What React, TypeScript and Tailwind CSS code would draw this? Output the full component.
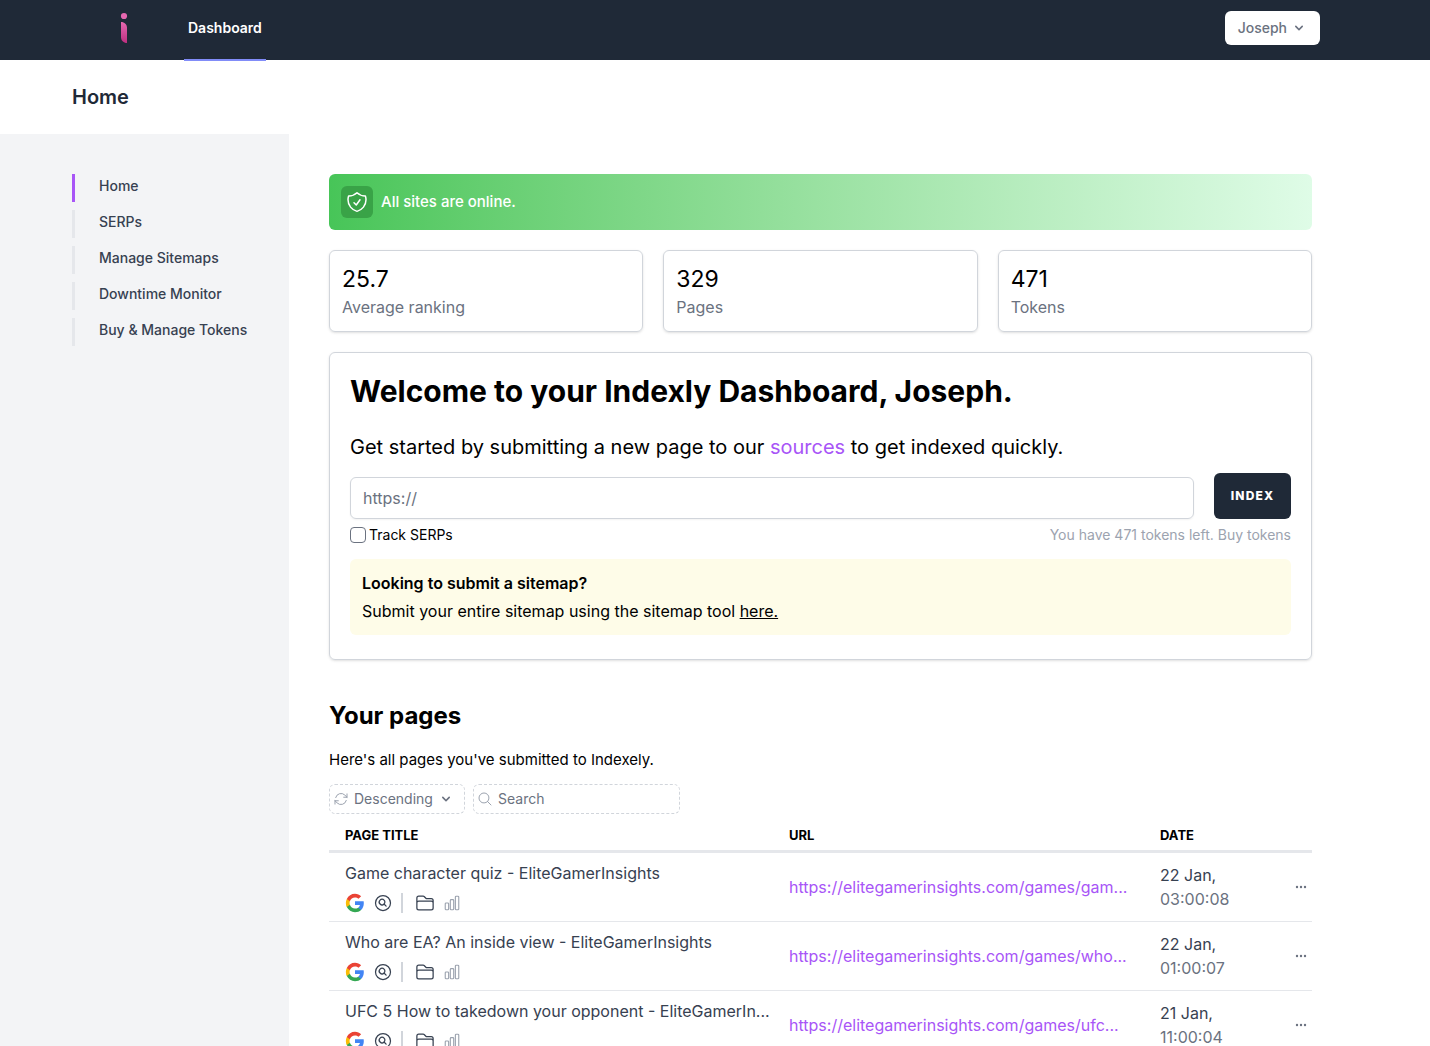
import { useState } from 'react';
import {
  HiOutlineArrowPath,
  HiOutlineChartBar,
  HiOutlineFolder,
  HiOutlineMagnifyingGlass,
  HiOutlineMagnifyingGlassCircle,
  HiOutlineShieldCheck,
} from 'react-icons/hi2';
import clsx from 'clsx';

const navItems = ['Home', 'SERPs', 'Manage Sitemaps', 'Downtime Monitor', 'Buy & Manage Tokens'];

const stats = [
  { value: '25.7', label: 'Average ranking' },
  { value: '329', label: 'Pages' },
  { value: '471', label: 'Tokens' },
];

const pages = [
  {
    title: 'Game character quiz - EliteGamerInsights',
    url: 'https://elitegamerinsights.com/games/gam...',
    day: '22 Jan,',
    time: '03:00:08',
  },
  {
    title: 'Who are EA? An inside view - EliteGamerInsights',
    url: 'https://elitegamerinsights.com/games/who...',
    day: '22 Jan,',
    time: '01:00:07',
  },
  {
    title: 'UFC 5 How to takedown your opponent - EliteGamerIn...',
    url: 'https://elitegamerinsights.com/games/ufc...',
    day: '21 Jan,',
    time: '11:00:04',
  },
];

export default function App() {
  return (
    <div className="flex min-h-screen flex-col bg-white font-['Inter','Roboto',sans-serif] text-black">
      <TopNav />
      <header className="px-[72px] py-[23px]">
        <h1 className="text-xl leading-7 font-semibold text-[#1f2937]">Home</h1>
      </header>
      <div className="flex flex-1">
        <Sidebar />
        <main className="min-w-0 flex-1 py-10 pr-[118px] pl-10">
          <div className="flex items-center gap-2 rounded-md bg-linear-to-r from-[#47c558] to-[#dffce7] p-3">
            <span className="flex size-8 items-center justify-center rounded-md bg-[#39a347]">
              <HiOutlineShieldCheck className="size-6 text-white" />
            </span>
            <p className="text-[15px] leading-6 font-medium text-white">All sites are online.</p>
          </div>

          <div className="mt-5 grid grid-cols-3 gap-5">
            {stats.map((stat) => (
              <div key={stat.label} className="rounded-md border border-[#d1d5db] p-3 shadow-sm">
                <p className="text-[23px] leading-8">{stat.value}</p>
                <p className="text-base leading-6 text-[#6b7280]">{stat.label}</p>
              </div>
            ))}
          </div>

          <SubmitCard />
          <PagesSection />
        </main>
      </div>
    </div>
  );
}

function TopNav() {
  return (
    <nav className="flex h-[60px] items-center justify-between bg-[#1f2937] pr-[110px] pl-[120px]">
      <div className="flex h-full items-center">
        <a href="#" aria-label="Indexly">
          <Logo />
        </a>
        <a
          href="#"
          className="ml-14 flex h-[61px] items-center self-start border-b-2 border-[#818cf8] px-1 pb-1 text-sm font-semibold text-white"
        >
          Dashboard
        </a>
      </div>
      <button className="mb-1 flex h-[34px] items-center gap-1 rounded-md bg-white px-[13px] text-sm font-medium text-[#6b7280]">
        Joseph
        <ChevronDown />
      </button>
    </nav>
  );
}

function Sidebar() {
  const [active, setActive] = useState('Home');

  return (
    <aside className="w-[289px] shrink-0 bg-[#f3f4f6] pt-10 pl-[72px]">
      <ul className="space-y-2">
        {navItems.map((item) => (
          <li key={item}>
            <a
              href="#"
              onClick={() => setActive(item)}
              className={clsx(
                'block border-l-3 pb-1 pl-6 text-sm leading-6 font-medium text-[#374151]',
                active === item ? 'border-[#a855f7]' : 'border-[#e5e7eb]'
              )}
            >
              {item}
            </a>
          </li>
        ))}
      </ul>
    </aside>
  );
}

function SubmitCard() {
  return (
    <section className="mt-5 rounded-md border border-[#d1d5db] px-5 pt-5 pb-6 shadow-sm">
      <h2 className="text-3xl leading-9 font-bold">Welcome to your Indexly Dashboard, Joseph.</h2>
      <p className="mt-6 text-xl leading-7">
        Get started by submitting a new page to our{' '}
        <a href="#" className="text-[#a855f7]">sources</a> to get indexed quickly.
      </p>
      <form onSubmit={(e) => e.preventDefault()}>
        <div className="mt-3 flex items-end gap-5">
          <input
            type="text"
            aria-label="Page URL"
            placeholder="https://"
            className="h-[42px] min-w-0 flex-1 rounded-md border border-[#d1d5db] px-3 text-base shadow-xs placeholder:text-[#6b7280]"
          />
          <button className="h-[46px] w-[77px] rounded-md bg-[#1f2937] text-xs font-extrabold tracking-widest text-white uppercase">
            Index
          </button>
        </div>
        <div className="mt-1.5 flex items-center justify-between text-sm leading-5">
          <label className="flex items-center gap-[3px]">
            <input type="checkbox" className="size-4 appearance-none rounded-sm border border-[#6b7280] bg-white checked:bg-[#a855f7]" />
            Track SERPs
          </label>
          <p className="text-[#9ca3af]">
            You have 471 tokens left. <a href="#">Buy tokens</a>
          </p>
        </div>
      </form>
      <div className="mt-3.5 space-y-1 rounded-md bg-[#fefce8] p-3 text-base leading-6">
        <p className="font-semibold">Looking to submit a sitemap?</p>
        <p>
          Submit your entire sitemap using the sitemap tool <a href="#" className="underline">here.</a>
        </p>
      </div>
    </section>
  );
}

function PagesSection() {
  return (
    <section className="mt-10">
      <h2 className="text-2xl leading-8 font-bold">Your pages</h2>
      <p className="mt-4 text-[15px] leading-6">Here's all pages you've submitted to Indexely.</p>

      <div className="mt-3 flex gap-2 text-sm text-[#6b7280]">
        <div className="flex h-[30px] w-[136px] items-center gap-[5px] rounded-md border border-dashed border-[#d1d5db] pr-[10px] pl-[3px]">
          <HiOutlineArrowPath className="size-4 shrink-0 text-[#9ca3af]" />
          <select aria-label="Sort order" className="min-w-0 flex-1 appearance-none bg-transparent">
            <option>Descending</option>
            <option>Ascending</option>
          </select>
          <ChevronDown />
        </div>
        <div className="flex h-[30px] w-[207px] items-center gap-[5px] rounded-md border border-dashed border-[#d1d5db] px-[3px]">
          <HiOutlineMagnifyingGlass className="size-4 shrink-0 text-[#9ca3af]" />
          <input
            type="text"
            aria-label="Search pages"
            placeholder="Search"
            className="min-w-0 flex-1 placeholder:text-[#6b7280]"
          />
        </div>
      </div>

      <table className="w-full table-fixed border-collapse text-left text-base leading-6">
        <thead>
          <tr className="border-b-3 border-[#e5e7eb] text-[13px] leading-5 uppercase">
            <th className="px-4 pt-[11px] pb-[5px] font-bold">Page title</th>
            <th className="w-[371px] px-4 pt-[11px] pb-[5px] font-bold">URL</th>
            <th className="w-[120px] px-4 pt-[11px] pb-[5px] font-bold">Date</th>
            <th className="w-12" />
          </tr>
        </thead>
        <tbody>
          {pages.map((page) => (
            <tr key={page.url} className="border-b border-[#e5e7eb]">
              <td className="px-4 py-2 text-[#374151]">
                <p className="whitespace-nowrap">{page.title}</p>
                <div className="mt-2 flex h-5 items-center">
                  <GoogleIcon />
                  <HiOutlineMagnifyingGlassCircle className="ml-2 size-5" />
                  <span className="ml-2 h-5 w-0.5 bg-[#d1d5db]" />
                  <HiOutlineFolder className="ml-3 size-5" />
                  <HiOutlineChartBar className="ml-2 size-[18px] text-[#9ca3af]" />
                </div>
              </td>
              <td className="px-4">
                <a href="#" className="whitespace-nowrap text-[#a855f7]">{page.url}</a>
              </td>
              <td className="px-4 text-[#374151]">
                {page.day}
                <span className="block text-[#6b7280]">{page.time}</span>
              </td>
              <td className="pr-1">
                <button aria-label="More options" className="ml-auto block text-[#6b7280]">
                  <svg viewBox="0 0 14 14" fill="currentColor" className="size-[14px]">
                    <circle cx="3" cy="7" r="1.2" />
                    <circle cx="7" cy="7" r="1.2" />
                    <circle cx="11" cy="7" r="1.2" />
                  </svg>
                </button>
              </td>
            </tr>
          ))}
        </tbody>
      </table>
    </section>
  );
}

function ChevronDown() {
  return (
    <svg viewBox="0 0 20 20" fill="currentColor" className="size-4 shrink-0">
      <path
        fillRule="evenodd"
        d="M5.293 7.293a1 1 0 011.414 0L10 10.586l3.293-3.293a1 1 0 111.414 1.414l-4 4a1 1 0 01-1.414 0l-4-4a1 1 0 010-1.414z"
        clipRule="evenodd"
      />
    </svg>
  );
}

function Logo() {
  return (
    <svg width="8" height="32" viewBox="0 0 8 32" className="mb-1">
      <defs>
        <linearGradient id="logo" x1="0" y1="0" x2="0" y2="1">
          <stop offset="0" stopColor="#e668b0" />
          <stop offset="1" stopColor="#bd2f80" />
        </linearGradient>
      </defs>
      <circle cx="4" cy="4" r="3.1" fill="#e668b0" />
      <path d="M1 10C4.5 10 7 12.5 7 16V31C3.5 31 1 28.5 1 25Z" fill="url(#logo)" />
    </svg>
  );
}

function GoogleIcon() {
  return (
    <svg viewBox="0 0 24 24" className="size-5">
      <path
        fill="#4285f4"
        d="M22.56 12.25c0-.78-.07-1.53-.2-2.25H12v4.26h5.92c-.26 1.37-1.04 2.53-2.21 3.31v2.77h3.57c2.08-1.92 3.28-4.74 3.28-8.09z"
      />
      <path
        fill="#34a853"
        d="M12 23c2.97 0 5.46-.98 7.28-2.66l-3.57-2.77c-.98.66-2.23 1.06-3.71 1.06-2.86 0-5.29-1.93-6.16-4.53H2.18v2.84C3.99 20.53 7.7 23 12 23z"
      />
      <path
        fill="#fbbc05"
        d="M5.84 14.09c-.22-.66-.35-1.36-.35-2.09s.13-1.43.35-2.09V7.07H2.18C1.43 8.55 1 10.22 1 12s.43 3.45 1.18 4.93l3.66-2.84z"
      />
      <path
        fill="#ea4335"
        d="M12 5.38c1.62 0 3.06.56 4.21 1.64l3.15-3.15C17.45 2.09 14.97 1 12 1 7.7 1 3.99 3.47 2.18 7.07l3.66 2.84c.87-2.6 3.3-4.53 6.16-4.53z"
      />
    </svg>
  );
}
